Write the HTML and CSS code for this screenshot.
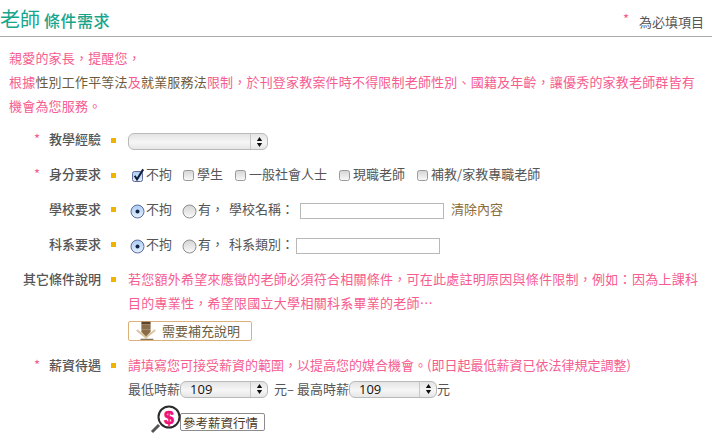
FILE: index.html
```html
<!DOCTYPE html>
<html lang="zh-Hant">
<head>
<meta charset="utf-8">
<title>老師條件需求</title>
<link rel="stylesheet" href="styles.css">
</head>
<body>
<svg class="defs" width="0" height="0" aria-hidden="true">
  <defs>
    <linearGradient id="radio-off" x1="0" y1="0" x2="0" y2="1"><stop offset="0" stop-color="#d4d4d4"/><stop offset="1" stop-color="#fafafa"/></linearGradient>
    <linearGradient id="radio-on" x1="0" y1="0" x2="0" y2="1"><stop offset="0" stop-color="#a9cdf2"/><stop offset="1" stop-color="#e4f1fd"/></linearGradient>
    <symbol id="radio" viewBox="0 0 15 15"><circle cx="7.5" cy="7.5" r="6.5" fill="url(#radio-off)" stroke="#8f8f8f"/></symbol>
    <symbol id="radio-checked" viewBox="0 0 15 15"><circle cx="7.5" cy="7.5" r="6.5" fill="url(#radio-on)" stroke="#5d6b9e"/><circle cx="7.5" cy="7.5" r="2" fill="#16234a"/></symbol>
    <symbol id="check" viewBox="0 0 13 13"><rect x="1.5" y="1.5" width="10" height="10" rx="2" fill="url(#radio-off)" stroke="#9a9a9a"/></symbol>
    <symbol id="check-on" viewBox="0 0 14 15"><rect x="1.5" y="3.5" width="10" height="10" rx="2" fill="url(#radio-on)" stroke="#5d6b9e"/><path d="M3.7 7.8 6 11.4 12.2 1.4" fill="none" stroke="#111c3a" stroke-width="2"/></symbol>
    <symbol id="updown" viewBox="0 0 7 12"><path d="M3.5 1 6.2 5H.8zM3.5 11 .8 7h5.4z" fill="#111"/></symbol>
  </defs>
</svg>

<header class="head">
  <h1 class="title"><span class="title-big">老師</span> <span class="title-small">條件需求</span></h1>
  <p class="req-note"><span class="star">*</span><span>為必填項目</span></p>
</header>

<section class="notice">
  <p>親愛的家長，提醒您，</p>
  <p>根據<span class="law">性別工作平等法</span>及<span class="law">就業服務法</span>限制，於刊登家教案件時不得限制老師性別、國籍及年齡，讓優秀的家教老師群皆有</p>
  <p>機會為您服務。</p>
</section>

<form class="form">
  <div class="row row-exp">
    <div class="label"><span class="star">*</span>教學經驗</div><i class="bullet"></i>
    <div class="field"><div class="select select-wide"><span class="select-val"></span><span class="select-btn"><svg width="7" height="12"><use href="#updown"/></svg></span></div></div>
  </div>
  <div class="row row-id">
    <div class="label"><span class="star">*</span>身分要求</div><i class="bullet"></i>
    <div class="field checks">
      <span class="opt"><svg class="ico-on" width="14" height="15"><use href="#check-on"/></svg>不拘</span>
      <span class="opt"><svg width="13" height="13"><use href="#check"/></svg>學生</span>
      <span class="opt"><svg width="13" height="13"><use href="#check"/></svg>一般社會人士</span>
      <span class="opt"><svg width="13" height="13"><use href="#check"/></svg>現職老師</span>
      <span class="opt"><svg width="13" height="13"><use href="#check"/></svg>補教/家教專職老師</span>
    </div>
  </div>
  <div class="row row-school">
    <div class="label">學校要求</div><i class="bullet"></i>
    <div class="field radios">
      <span class="opt"><svg width="15" height="15"><use href="#radio-checked"/></svg>不拘</span>
      <span class="opt"><svg width="15" height="15"><use href="#radio"/></svg>有，</span>
      <span class="sub-label">學校名稱：</span>
      <span class="text-input ti-school"></span>
      <span class="clear">清除內容</span>
    </div>
  </div>
  <div class="row row-dept">
    <div class="label">科系要求</div><i class="bullet"></i>
    <div class="field radios">
      <span class="opt"><svg width="15" height="15"><use href="#radio-checked"/></svg>不拘</span>
      <span class="opt"><svg width="15" height="15"><use href="#radio"/></svg>有，</span>
      <span class="sub-label">科系類別：</span>
      <span class="text-input ti-dept"></span>
    </div>
  </div>
  <div class="row row-other">
    <div class="label">其它條件說明</div><i class="bullet"></i>
    <div class="field stack">
      <p class="pink lh24">若您額外希望來應徵的老師必須符合相關條件，可在此處註明原因與條件限制，例如：因為上課科目的專業性，希望限國立大學相關科系畢業的老師…</p>
      <span class="more-btn"><svg width="26" height="20" viewBox="0 0 26 20"><path d="M3 9l10 8 10-8" fill="none" stroke="#d9c49c" stroke-width="2"/><path d="M8 8h10v3l-5 5-5-5z" fill="#8a6d48"/><path d="M8 0h10v3H8z" fill="#5f4328"/><path d="M8 3h10v5H8z" fill="#8a6d48"/><path d="M7 19h14" stroke="#5f4328"/></svg>需要補充說明</span>
    </div>
  </div>
  <div class="row row-pay">
    <div class="label"><span class="star">*</span>薪資待遇</div><i class="bullet"></i>
    <div class="field stack">
      <p class="pink pay-note">請填寫您可接受薪資的範圍，以提高您的媒合機會。(即日起最低薪資已依法律規定調整)</p>
      <div class="pay-line">
        <span>最低時薪</span>
        <div class="select select-pay"><span class="select-val">109</span><span class="select-btn"><svg width="7" height="12"><use href="#updown"/></svg></span></div>
        <span class="unit">元–</span>
        <span>最高時薪</span>
        <div class="select select-pay"><span class="select-val">109</span><span class="select-btn"><svg width="7" height="12"><use href="#updown"/></svg></span></div>
        <span>元</span>
      </div>
      <div class="ref-wrap">
        <span class="ref-btn">參考薪資行情</span>
        <svg class="ref-glass" width="34" height="30" viewBox="0 0 34 30"><path d="M2 28 9 21" stroke="#555" stroke-width="3"/><circle cx="19" cy="13" r="10.500" fill="#fff" stroke="#2b2b2b" stroke-width="2"/><text x="19" y="19.500" text-anchor="middle" class="ref-s">$</text></svg>
      </div>
    </div>
  </div>
</form>
</body>
</html>
```
FILE: styles.css
```css
* { box-sizing: border-box; }
html, body { margin: 0; padding: 0; }
body {
  width: 712px;
  height: 435px;
  overflow: hidden;
  background: #fff;
  color: #555;
  font: 13px/20px "Noto Sans CJK TC", "Liberation Sans", sans-serif;
}
p { margin: 0; }
.defs { position: absolute; }

.head {
  height: 37px;
  display: flex;
  justify-content: space-between;
  align-items: flex-end;
  border-bottom: 1px solid #aaa;
}
.title {
  margin: 0 0 1px;
  font-weight: 400;
  color: #17a58c;
  display: flex;
  align-items: baseline;
  gap: 4px;
  line-height: 30px;
}
.title-big { font-size: 20px; }
.title-small { font-size: 16px; font-weight: 500; letter-spacing: .5px; }
.req-note {
  display: flex;
  align-items: flex-start;
  gap: 10px;
  margin: 0 8px 5px 0;
  line-height: 18px;
}
.star { color: #f65c90; }
.req-note .star { line-height: 14px; margin-top: -1px; }

.notice {
  padding: 9px 0 0 9px;
  color: #f65c90;
}
.notice p { height: 24px; line-height: 24px; white-space: nowrap; letter-spacing: .19px; }
.law { color: #6d5b3c; }

.form { margin-top: 11px; }
.row { display: flex; align-items: flex-start; }
.label {
  width: 101px;
  flex: none;
  text-align: right;
  color: #555;
  font-weight: 500;
  position: relative;
  line-height: 20px;
}
.label .star { position: absolute; left: 34px; top: 0; font-weight: 400; }
.bullet {
  flex: none;
  width: 5px;
  height: 5px;
  background: #f0b400;
  margin: 8px 12px 0 10px;
}
.row-exp .bullet, .row-id .bullet { margin-top: 9px; }
.field { flex: 1; min-width: 0; }
.row-exp { height: 35px; }
.row-exp .field { margin-top: 4px; }
.row-id { height: 35px; }
.row-school { height: 35px; }
.row-dept { height: 35px; }
.row-other { height: 86px; }

.checks, .radios { display: flex; align-items: center; height: 20px; white-space: nowrap; }
.opt { display: inline-flex; align-items: center; }
.checks .opt { margin-right: 11px; gap: 2px; }
.checks svg { margin-top: 2px; }
.checks .opt:first-child { margin-left: 3px; margin-right: 10px; gap: 1px; }
.radios .opt { gap: 1px; margin-right: 10px; }
.radios .opt:nth-child(2) { margin-right: 5px; }
.radios .opt svg { margin-top: 4px; }
.radios { padding-left: 2px; }
.sub-label { margin-right: 6px; }
.row-dept .sub-label { margin-right: 2px; }
.text-input {
  display: block;
  height: 16px;
  margin-top: 3px;
  border: 1px solid #b8b8b8;
  background: #fff;
}
.ti-school { width: 144px; }
.ti-dept { width: 144px; }
.clear { margin-left: 7px; color: #8a6d3b; }

.select {
  display: flex;
  height: 17px;
  border: 1px solid #b9b9b9;
  border-radius: 6px;
  background: linear-gradient(#e4e4e4, #f6f6f6 55%, #e6e6e6);
  overflow: hidden;
}
.select-wide { width: 140px; }
.select-val {
  flex: 1;
  padding-left: 9px;
  color: #111;
  font: 13px/15px "Open Sans", "Liberation Sans", sans-serif;
}
.select-btn {
  width: 17px;
  flex: none;
  display: flex;
  align-items: center;
  justify-content: center;
  border-left: 1px solid #c8c8c8;
}
.select-pay { width: 88px; }

.stack p { white-space: normal; }
.pink { color: #f65c90; font-weight: 400; }
.lh24 { line-height: 24px; width: 575px; margin-top: -2px; letter-spacing: .26px; }
.more-btn {
  display: flex;
  align-items: center;
  width: 124px;
  height: 20px;
  margin-top: 6px;
  padding-left: 5px;
  gap: 4px;
  border: 1px solid #dcb27a;
  border-radius: 2px;
  color: #6d5b3c;
  white-space: nowrap;
}
.more-btn svg { margin-top: -1px; flex: none; width: 24px; }

.pay-line {
  display: flex;
  align-items: center;
  height: 18px;
  margin-top: 5px;
  white-space: nowrap;
}
.pay-line .select { margin: 0; }
.unit { margin: 0 3px 0 6px; }
.ref-wrap { position: relative; margin: 15px 0 0 45px; width: 93px; height: 17px; }
.ref-btn {
  position: absolute;
  left: 7px;
  top: 0;
  width: 85px;
  height: 18px;
  padding-left: 2px;
  border: 1px solid #8c8c8c;
  border-radius: 2px;
  color: #4b3a22;
  font-size: 12.5px;
  line-height: 17px;
  white-space: nowrap;
  background: #fff;
}
.ref-glass { position: absolute; left: -23px; top: -9px; }
.ref-s { font: 700 18px "Liberation Sans", sans-serif; fill: #f0107a; stroke: #f0107a; stroke-width: .6px; }
```
